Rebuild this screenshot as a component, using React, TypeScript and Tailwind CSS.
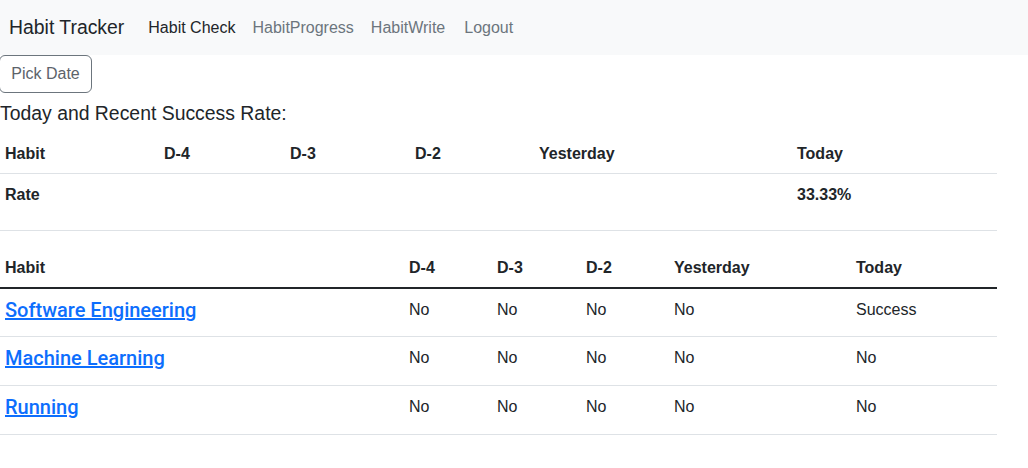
import React from "react";

export default function App() {
  const habits = [
    { name: "Software Engineering", vals: ["No", "No", "No", "No", "Success"] },
    { name: "Machine Learning", vals: ["No", "No", "No", "No", "No"] },
    { name: "Running", vals: ["No", "No", "No", "No", "No"] },
  ];
  return (
    <div className="bg-white text-[#212529] w-[1028px] h-[468px] overflow-hidden font-['Liberation_Sans',Arial,sans-serif]">
      <nav className="h-[55px] bg-[#f8f9fa] flex items-center">
        <span className="ml-[9px] text-[19.4px] text-[#212529]">Habit Tracker</span>
        <div className="flex ml-[24px] text-[16px]">
          <span className="text-[#212529]">Habit Check</span>
          <span className="ml-[17px] text-[#6c757d]">HabitProgress</span>
          <span className="ml-[17px] text-[#6c757d]">HabitWrite</span>
          <span className="ml-[19px] text-[#6c757d]">Logout</span>
        </div>
      </nav>
      <button className="ml-[-1px] h-[38px] w-[93px] border border-[#6c757d] rounded-[6px] text-[16px] text-[#5c636a] bg-white">
        Pick Date
      </button>
      <h5 className="mt-[8px] h-[24px] leading-[24px] text-[19.4px] mb-[8px]">Today and Recent Success Rate:</h5>
      <table className="w-[997px] border-collapse table-fixed text-[16px]">
        <colgroup>
          <col className="w-[159px]" />
          <col className="w-[126px]" />
          <col className="w-[125px]" />
          <col className="w-[124px]" />
          <col className="w-[258px]" />
          <col className="w-[205px]" />
        </colgroup>
        <tbody>
          <tr className="h-[40px] border-b border-[#dee2e6] font-bold">
            <td className="px-[5px] pt-[2px]">Habit</td>
            <td className="px-[5px] pt-[2px]">D-4</td>
            <td className="px-[5px] pt-[2px]">D-3</td>
            <td className="px-[5px] pt-[2px]">D-2</td>
            <td className="px-[5px] pt-[2px]">Yesterday</td>
            <td className="px-[5px] pt-[2px]">Today</td>
          </tr>
          <tr className="h-[57px] border-b border-[#dee2e6] font-bold align-top">
            <td className="px-[5px] pt-[9px] leading-[24px]">Rate</td>
            <td />
            <td />
            <td />
            <td />
            <td className="px-[5px] pt-[9px] leading-[24px]">33.33%</td>
          </tr>
        </tbody>
      </table>
      <table className="mt-[17px] w-[997px] border-collapse table-fixed">
        <colgroup>
          <col className="w-[404px]" />
          <col className="w-[88px]" />
          <col className="w-[89px]" />
          <col className="w-[88px]" />
          <col className="w-[182px]" />
          <col className="w-[146px]" />
        </colgroup>
        <thead>
          <tr className="h-[40px] border-b-2 border-[#212529] font-bold text-[16px]">
            <th className="px-[5px] pt-[2px] text-left">Habit</th>
            <th className="px-[5px] pt-[2px] text-left">D-4</th>
            <th className="px-[5px] pt-[2px] text-left">D-3</th>
            <th className="px-[5px] pt-[2px] text-left">D-2</th>
            <th className="px-[5px] pt-[2px] text-left">Yesterday</th>
            <th className="px-[5px] pt-[2px] text-left">Today</th>
          </tr>
        </thead>
        <tbody>
          {habits.map((h) => (
            <tr key={h.name} className="h-[49px] border-b border-[#dee2e6] text-[16px] align-top">
              <td className="px-[5px] pt-[9px] leading-[24px]">
                <a className="text-[#0d6efd] underline text-[20px] font-medium font-['Roboto',sans-serif]">
                  {h.name}
                </a>
              </td>
              {h.vals.map((v, i) => (
                <td key={i} className="px-[5px] pt-[9px] leading-[24px]">
                  {v}
                </td>
              ))}
            </tr>
          ))}
        </tbody>
      </table>
    </div>
  );
}
